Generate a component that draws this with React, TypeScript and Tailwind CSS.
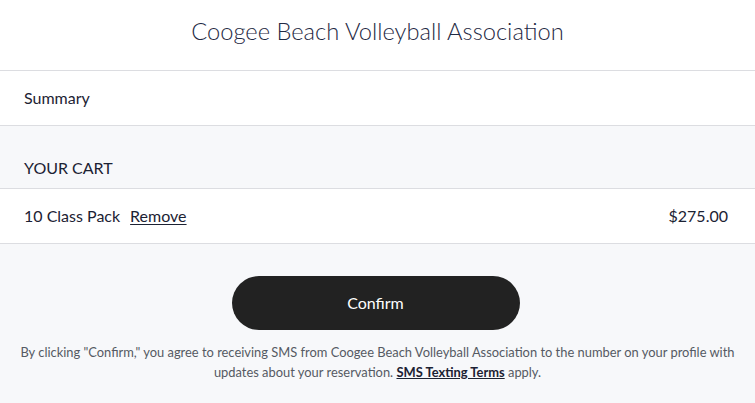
export default function App() {
    return (
        <div className="min-h-screen bg-[#f7f8fa] text-[#1c2233]" style={{ fontFamily: 'Lato, "Open Sans", sans-serif' }}>
            <header className="h-[71px] bg-white border-b border-[#dcdde1] flex items-center justify-center">
                <h1 className="text-[23.7px] font-light text-[#1f2a44] pb-[6px]">Coogee Beach Volleyball Association</h1>
            </header>

            <div className="h-[55px] bg-white border-b border-[#dcdde1] flex items-center px-6 text-[16px]">
                Summary
            </div>

            <div className="h-[63px] border-b border-[#dcdde1] flex items-end px-6 pb-[8px] text-[16px] uppercase">
                Your Cart
            </div>

            <div className="h-[55px] bg-white border-b border-[#dcdde1] flex items-center justify-between px-6 text-[16px]">
                <div className="flex items-center gap-[10px]">
                    <span>10 Class Pack</span>
                    <a href="#" className="underline underline-offset-2">Remove</a>
                </div>
                <span className="pr-[3px]">$275.00</span>
            </div>

            <div className="flex flex-col items-center pt-[32px]">
                <button className="w-[288px] h-[54px] rounded-full bg-[#222222] text-white text-[16px] -translate-x-[2px]">
                    Confirm
                </button>
                <p className="mt-[12px] px-4 text-center text-[12.9px] leading-[20px] text-[#555a63]">
                    By clicking "Confirm," you agree to receiving SMS from Coogee Beach Volleyball Association to the number on your profile with updates about your reservation.{' '}
                    <a href="#" className="underline font-bold text-[#1c2233]">SMS Texting Terms</a> apply.
                </p>
            </div>
        </div>
    );
}
